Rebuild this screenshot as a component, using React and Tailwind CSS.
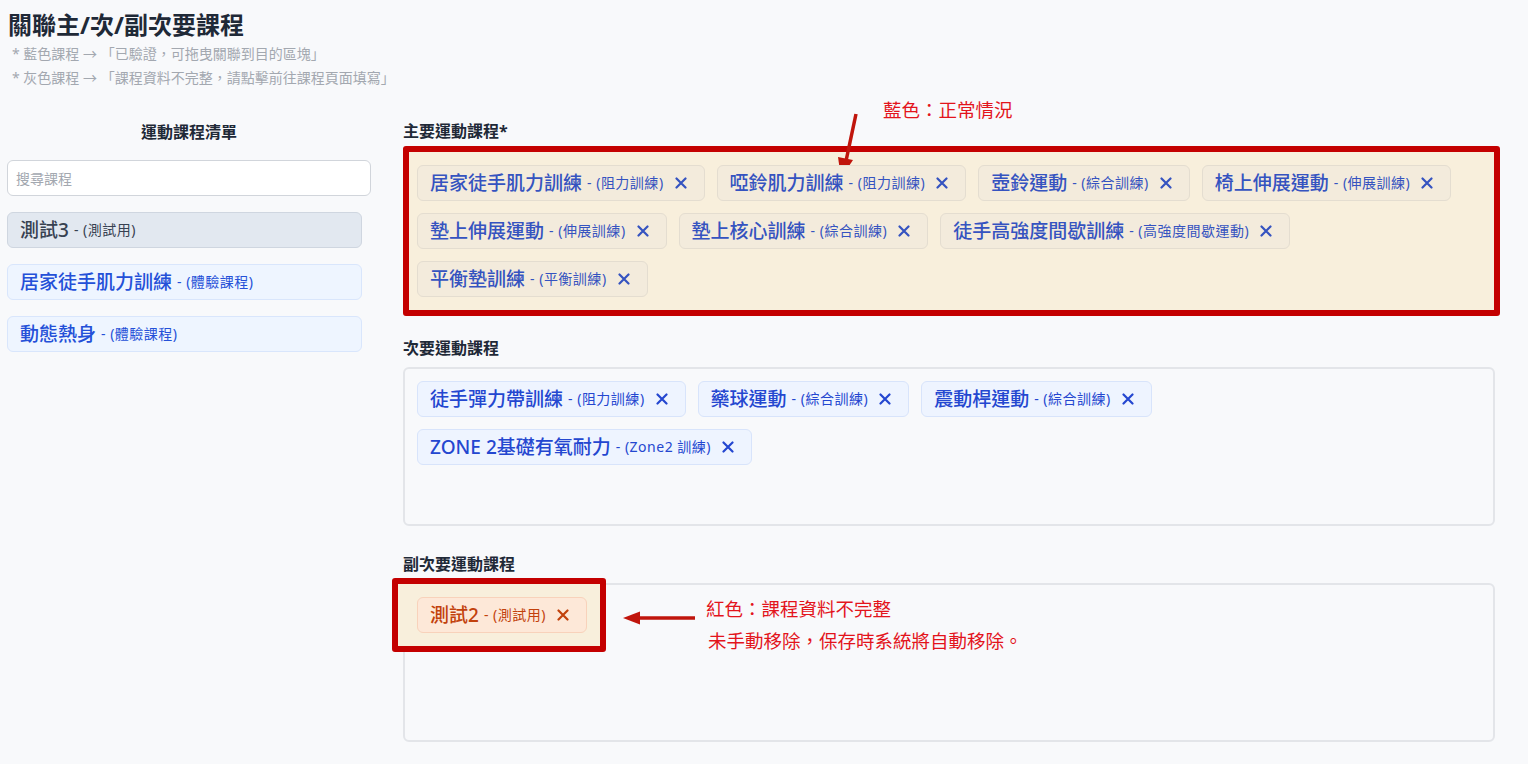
import React from "react";

const XIcon = ({ className }) => (
  <svg viewBox="0 0 12 12" className={className} fill="none" stroke="currentColor" strokeWidth="2.2" strokeLinecap="round">
    <path d="M1.5 1.5 L10.5 10.5 M10.5 1.5 L1.5 10.5" />
  </svg>
);

const mainChips = [
  ["居家徒手肌力訓練", "阻力訓練"],
  ["啞鈴肌力訓練", "阻力訓練"],
  ["壺鈴運動", "綜合訓練"],
  ["椅上伸展運動", "伸展訓練"],
  ["墊上伸展運動", "伸展訓練"],
  ["墊上核心訓練", "綜合訓練"],
  ["徒手高強度間歇訓練", "高強度間歇運動"],
  ["平衡墊訓練", "平衡訓練"],
];

const secChips = [
  ["徒手彈力帶訓練", "阻力訓練"],
  ["藥球運動", "綜合訓練"],
  ["震動桿運動", "綜合訓練"],
  ["ZONE 2基礎有氧耐力", "Zone2 訓練"],
];

function Chip({ name, cat, variant }) {
  const styles = {
    main: "bg-[#f3ebdc] border-[#e4ddd0] text-[#3553c0]",
    sec: "bg-[#eef4ff] border-[#d8e4fb] text-[#2447d0]",
    red: "bg-[#fde8d8] border-[#f8d2bb] text-[#c2410c]",
  };
  return (
    <div className={`relative z-10 flex items-center h-[36px] pl-3 pr-[17px] rounded-md border ${styles[variant]}`}>
      <span className="text-[19px] leading-none font-medium">{name}</span>
      <span className="text-[14px] leading-none ml-[5px] tracking-[0.5px]">- ({cat})</span>
      <XIcon className="w-[12px] h-[12px] ml-[11px]" />
    </div>
  );
}

export default function App() {
  return (
    <div className="min-h-screen bg-[#f8f9fb] px-[7px] pt-[8px] font-['Noto_Sans','Noto_Sans_CJK_TC',sans-serif] text-[#1f2937]">
      <h1 className="text-[24px] font-bold leading-[34px] pl-[1px] text-[#1f2937]">關聯主/次/副次要課程</h1>
      <p className="text-[14px] leading-[24px] text-[#a3a8b0] pl-[5px]">* 藍色課程 → 「已驗證，可拖曳關聯到目的區塊」</p>
      <p className="text-[14px] leading-[24px] text-[#a3a8b0] pl-[5px]">* 灰色課程 → 「課程資料不完整，請點擊前往課程頁面填寫」</p>

      <div className="flex gap-8 mt-[31px]">
        {/* Left column */}
        <div className="w-[364px] shrink-0">
          <div className="text-[16px] font-bold leading-[22px] text-center">運動課程清單</div>
          <input
            className="mt-[17px] w-full h-[36px] rounded-md border border-[#d1d5db] bg-white px-2 text-[14px] placeholder:text-[#a3a8b0] outline-none"
            placeholder="搜尋課程"
          />
          <div className="mt-4 flex flex-col gap-4 w-[355px]">
            <div className="h-[36px] flex items-center px-3 rounded-md border border-[#cfd6e0] bg-[#e2e8f0] text-[#374151]">
              <span className="text-[19px] font-medium leading-none">測試3</span>
              <span className="text-[14px] leading-none ml-[5px] tracking-[0.5px]">- (測試用)</span>
            </div>
            <div className="h-[36px] flex items-center px-3 rounded-md border border-[#d9e6fc] bg-[#eef5ff] text-[#2450d8]">
              <span className="text-[19px] font-medium leading-none">居家徒手肌力訓練</span>
              <span className="text-[14px] leading-none ml-[5px] tracking-[0.5px]">- (體驗課程)</span>
            </div>
            <div className="h-[36px] flex items-center px-3 rounded-md border border-[#d9e6fc] bg-[#eef5ff] text-[#2450d8]">
              <span className="text-[19px] font-medium leading-none">動態熱身</span>
              <span className="text-[14px] leading-none ml-[5px] tracking-[0.5px]">- (體驗課程)</span>
            </div>
          </div>
        </div>

        {/* Right column */}
        <div className="w-[1092px] shrink-0 relative">
          <div className="text-[16px] font-bold leading-[22px] -mt-[1px]">主要運動課程*</div>
          <div className="mt-[4px] w-[1097px] border-[6px] border-[#c40000] rounded-[3px] bg-[#f8efdc] pt-[13px] pb-[13px] pl-[8px] pr-[8px] flex flex-wrap gap-3">
            {mainChips.map(([n, c]) => (
              <Chip key={n} name={n} cat={c} variant="main" />
            ))}
          </div>
          {/* annotation 1 */}
          <div className="absolute left-[480px] top-[-24px] text-[18.5px] leading-[26px] text-[#e3141c]">藍色：正常情況</div>
          <svg className="absolute left-[426px] top-[-10px]" width="34" height="72" viewBox="0 0 34 72">
            <line x1="27" y1="3" x2="17" y2="50" stroke="#c0150c" strokeWidth="3.5" />
            <polygon points="9,46 24,49 12,67" fill="#c0150c" />
          </svg>

          <div className="mt-[21px] text-[16px] font-bold leading-[22px]">次要運動課程</div>
          <div className="mt-[8px] h-[159px] border-2 border-[#e3e5e9] rounded-md p-3 flex flex-wrap content-start gap-3">
            {secChips.map(([n, c]) => (
              <Chip key={n} name={n} cat={c} variant="sec" />
            ))}
          </div>

          <div className="mt-[27px] text-[16px] font-bold leading-[22px]">副次要運動課程</div>
          <div className="relative mt-[8px] h-[159px] border-2 border-[#e3e5e9] rounded-md p-3 flex flex-wrap content-start gap-3">
            <div className="absolute left-[-13px] top-[-7px] w-[214px] h-[74px] border-[6px] border-[#c40000] rounded-[3px] bg-[#f8efdc] z-0" />
            <Chip name="測試2" cat="測試用" variant="red" />
            <svg className="absolute left-[217px] top-[25px]" width="74" height="16" viewBox="0 0 74 16">
              <line x1="14" y1="8" x2="73" y2="8" stroke="#c0150c" strokeWidth="3.5" />
              <polygon points="1,8 18,1.5 18,14.5" fill="#c0150c" />
            </svg>
            <div className="absolute left-[301px] top-[8px] text-[18.5px] leading-[32px] text-[#e3141c]">
              <div>紅色：課程資料不完整</div>
              <div className="pl-[2px]">未手動移除，保存時系統將自動移除。</div>
            </div>
          </div>
        </div>
      </div>
    </div>
  );
}
